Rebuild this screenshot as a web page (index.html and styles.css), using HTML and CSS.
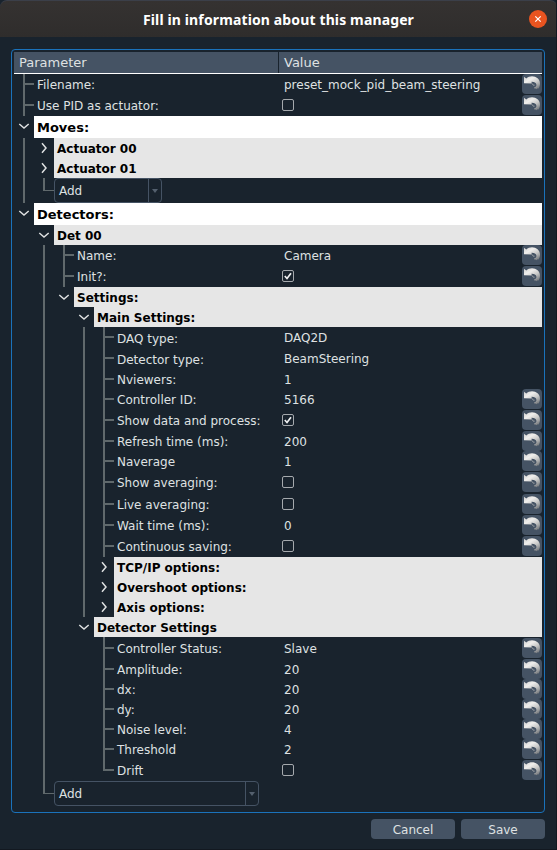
FILE: index.html
```
<!DOCTYPE html>
<html lang="en">
<head>
<meta charset="utf-8">
<title>Fill in information about this manager</title>
<link rel="stylesheet" href="styles.css">
</head>
<body>
<svg class="defs" width="0" height="0" aria-hidden="true">
  <defs>
    <linearGradient id="silver" x1="0" y1="0" x2="0.7" y2="1">
      <stop offset="0" stop-color="#cfcfcf"/><stop offset="0.35" stop-color="#efeeec"/><stop offset="0.65" stop-color="#cbcbca"/><stop offset="1" stop-color="#808386"/>
    </linearGradient>
    <symbol id="undo" viewBox="0 0 20 20"><path fill="url(#silver)" d="M2 2.800 4.300 4.500C7 1.600 12.500 1.400 15.600 4.300c2.900 2.800 3.200 7 .9 10.200l-1-.2-.8 1-.9-.8-1 .2-1-1.200c1.800-.2 2.900-1.500 2.600-3.100-.3-1.700-2.200-2.700-4.900-2.600L9.800 9.400 2 9.200z"/><path fill="none" stroke="#a9acae" stroke-width="1" d="M10.300 9.600c.2 1.200 1 1.700 2.200 1.600"/></symbol>
    <symbol id="down" viewBox="0 0 20 20"><path fill="none" stroke="#dfe1e2" stroke-width="1.500" d="m5.300 8 4.700 4L14.700 8"/></symbol>
    <symbol id="right" viewBox="0 0 20 20"><path fill="none" stroke="#dfe1e2" stroke-width="1.500" d="m8 5.300 4 4.700-4 4.700"/></symbol>
    <symbol id="tick" viewBox="0 0 10 10"><path fill="none" stroke="#f0f1f2" stroke-width="1.700" d="m1.800 5 2.200 2.500L8 2.200"/></symbol>
  </defs>
</svg>
<header class="titlebar">
  <h1>Fill in information about this manager</h1>
  <button class="close" aria-label="Close"><svg viewBox="0 0 18 18"><path d="m6.300 6.300 5.400 5.400m0-5.400-5.400 5.400" stroke="#fff" stroke-width="1.200"/></svg></button>
</header>
<main class="panel">
  <div class="head"><span class="col-name">Parameter</span><span class="col-value">Value</span></div>
  <ul class="tree">
    <li class="row h21"><i class="twig"></i><span class="label">Filename:</span><span class="value">preset_mock_pid_beam_steering</span><svg class="undo"><use href="#undo"/></svg></li>
    <li class="row h21"><i class="twig"></i><span class="label">Use PID as actuator:</span><span class="value"><i class="check"></i></span><svg class="undo"><use href="#undo"/></svg></li>
    <li>
      <div class="row group top"><svg class="arrow"><use href="#down"/></svg><span class="label">Moves:</span></div>
      <ul class="children rail">
        <li class="row group"><svg class="arrow"><use href="#right"/></svg><span class="label">Actuator 00</span></li>
        <li class="row group"><svg class="arrow"><use href="#right"/></svg><span class="label">Actuator 01</span></li>
        <li class="row add"><i class="twig last"></i><span class="combo">Add<i class="drop"></i></span></li>
      </ul>
    </li>
    <li>
      <div class="row group top"><svg class="arrow"><use href="#down"/></svg><span class="label">Detectors:</span></div>
      <ul class="children">
        <li>
          <div class="row group"><svg class="arrow"><use href="#down"/></svg><span class="label">Det 00</span></div>
          <ul class="children rail">
            <li class="row h21"><i class="twig"></i><span class="label">Name:</span><span class="value">Camera</span><svg class="undo"><use href="#undo"/></svg></li>
            <li class="row h21"><i class="twig"></i><span class="label">Init?:</span><span class="value"><svg class="check"><use href="#tick"/></svg></span><svg class="undo"><use href="#undo"/></svg></li>
            <li>
              <div class="row group"><svg class="arrow"><use href="#down"/></svg><span class="label">Settings:</span></div>
              <ul class="children">
                <li>
                  <div class="row group"><svg class="arrow"><use href="#down"/></svg><span class="label">Main Settings:</span></div>
                  <ul class="children rail">
                    <li class="row h21"><i class="twig"></i><span class="label low">DAQ type:</span><span class="value">DAQ2D</span></li>
                    <li class="row h21"><i class="twig"></i><span class="label low">Detector type:</span><span class="value">BeamSteering</span></li>
                    <li class="row"><i class="twig"></i><span class="label">Nviewers:</span><span class="value">1</span></li>
                    <li class="row h21"><i class="twig"></i><span class="label">Controller ID:</span><span class="value">5166</span><svg class="undo"><use href="#undo"/></svg></li>
                    <li class="row h21"><i class="twig"></i><span class="label">Show data and process:</span><span class="value"><svg class="check"><use href="#tick"/></svg></span><svg class="undo"><use href="#undo"/></svg></li>
                    <li class="row"><i class="twig"></i><span class="label">Refresh time (ms):</span><span class="value">200</span><svg class="undo"><use href="#undo"/></svg></li>
                    <li class="row h21"><i class="twig"></i><span class="label">Naverage</span><span class="value">1</span><svg class="undo"><use href="#undo"/></svg></li>
                    <li class="row h22"><i class="twig"></i><span class="label">Show averaging:</span><span class="value"><i class="check"></i></span><svg class="undo"><use href="#undo"/></svg></li>
                    <li class="row h21"><i class="twig"></i><span class="label">Live averaging:</span><span class="value"><i class="check"></i></span><svg class="undo"><use href="#undo"/></svg></li>
                    <li class="row h21"><i class="twig"></i><span class="label">Wait time (ms):</span><span class="value">0</span><svg class="undo"><use href="#undo"/></svg></li>
                    <li class="row h21"><i class="twig"></i><span class="label">Continuous saving:</span><span class="value"><i class="check"></i></span><svg class="undo"><use href="#undo"/></svg></li>
                    <li class="row group"><svg class="arrow"><use href="#right"/></svg><span class="label">TCP/IP options:</span></li>
                    <li class="row group"><svg class="arrow"><use href="#right"/></svg><span class="label">Overshoot options:</span></li>
                    <li class="row group"><svg class="arrow"><use href="#right"/></svg><span class="label">Axis options:</span></li>
                  </ul>
                </li>
                <li>
                  <div class="row group"><svg class="arrow"><use href="#down"/></svg><span class="label">Detector Settings</span></div>
                  <ul class="children">
                    <li class="row h22 spaced"><i class="twig"></i><span class="label">Controller Status:</span><span class="value">Slave</span><svg class="undo"><use href="#undo"/></svg></li>
                    <li class="row"><i class="twig"></i><span class="label">Amplitude:</span><span class="value">20</span><svg class="undo"><use href="#undo"/></svg></li>
                    <li class="row"><i class="twig"></i><span class="label">dx:</span><span class="value">20</span><svg class="undo"><use href="#undo"/></svg></li>
                    <li class="row"><i class="twig"></i><span class="label">dy:</span><span class="value">20</span><svg class="undo"><use href="#undo"/></svg></li>
                    <li class="row"><i class="twig"></i><span class="label">Noise level:</span><span class="value">4</span><svg class="undo"><use href="#undo"/></svg></li>
                    <li class="row h21"><i class="twig"></i><span class="label">Threshold</span><span class="value">2</span><svg class="undo"><use href="#undo"/></svg></li>
                    <li class="row h21"><i class="twig last"></i><span class="label">Drift</span><span class="value"><i class="check"></i></span><svg class="undo"><use href="#undo"/></svg></li>
                  </ul>
                </li>
              </ul>
            </li>
          </ul>
        </li>
        <li class="row add wide"><i class="twig last"></i><span class="combo">Add<i class="drop"></i></span></li>
      </ul>
    </li>
  </ul>
</main>
<footer class="actions"><button>Cancel</button><button>Save</button></footer>
</body>
</html>
```
FILE: styles.css
```
* { box-sizing: border-box; }
body {
  margin: 0;
  width: 557px;
  height: 850px;
  overflow: hidden;
  background: #19232d;
  color: #dfe1e2;
  font: 12px/20px "DejaVu Sans", sans-serif;
  border-right: 1px solid #121820;
  border-bottom: 1px solid #121820;
}
.defs { display: block; height: 0; }
ul { margin: 0; padding: 0; list-style: none; }
button { border: 0; padding: 0; font: inherit; color: inherit; }

.titlebar {
  display: flex;
  align-items: center;
  height: 37px;
  margin-right: -1px;
  padding: 0 10px 0 28px;
  background: linear-gradient(#353231, #2f2d2c);
  border-top: 1px solid #3b3f49;
  border-radius: 7px 7px 0 0;
}
.titlebar h1 {
  flex: 1;
  margin: 0;
  text-align: center;
  color: #fff;
  font: bold 14px/20px "Noto Sans", sans-serif;
  letter-spacing: 0.13px;
  padding-top: 2px;
}
.close { width: 18px; height: 18px; border-radius: 50%; background: #e95420; }
.close svg { display: block; }

.panel {
  width: 534px;
  height: 764px;
  margin: 12px 0 0 11px;
  padding: 2px;
  border: 1px solid #1a72bb;
  border-radius: 4px;
}
.head {
  display: flex;
  height: 22px;
  gap: 1px;
  border-bottom: 1px solid #fff;
  font-size: 13px;
  line-height: 21px;
}
.head span { background: #455364; padding-left: 5px; }
.head .col-name { width: 264px; }
.head .col-value { flex: 1; }

.row { display: flex; height: 20px; }
.h21 { height: 21px; }
.h22 { height: 22px; }
.children { padding-left: 20px; }
.rail { background: linear-gradient(#60696c, #60696c) 9px 0 / 2px 100% no-repeat; }
.twig {
  flex: 0 0 20px;
  background:
    linear-gradient(#60696c, #60696c) 9px 0 / 2px 100% no-repeat,
    linear-gradient(#60696c, #60696c) 9px 9px / 11px 2px no-repeat;
}
.twig.last { background-size: 2px 11px, 11px 2px; }
.arrow { flex: 0 0 20px; height: 20px; }
.label { flex: 1; padding-left: 3px; white-space: nowrap; line-height: 22px; }
.value { width: 238px; height: 20px; line-height: 22px; }
.value:last-child { width: 258px; }
.low { line-height: 24px; }
.spaced > * { margin-top: 1px; }
.spaced .twig { margin-top: 0; background-position: 9px 0, 9px 10px; }
.group .label { height: 20px; background: #e6e6e6; color: #000; font-weight: bold; }
.group.top { height: 22px; }
.group.top .label { height: 22px; background: #fff; font-size: 13px; line-height: 23px; }
.undo { width: 20px; height: 20px; border-radius: 4px; background: #455364; }

.check {
  display: block;
  width: 12px;
  height: 12px;
  margin: 4px 0 0 -2px;
  border: 1px solid #a5a9ad;
  border-radius: 2px;
}

.add { height: 25px; }
.add .twig.last { background-size: 2px 13px, 11px 1px; background-position: 9px 0, 9px 12px; }
.combo {
  display: flex;
  width: 108px;
  height: 25px;
  padding-left: 4px;
  justify-content: space-between;
  border: 1px solid #455364;
  border-radius: 4px;
  line-height: 24px;
}
.wide .combo { width: 205px; }
.drop {
  display: flex;
  width: 13px;
  height: 23px;
  border-left: 1px solid #455364;
  align-items: center;
  justify-content: center;
}
.drop::after {
  content: "";
  border: solid transparent;
  border-width: 4px 3.5px 0;
  border-top-color: #54606e;
}

.actions { display: flex; justify-content: flex-end; gap: 6px; margin: 6px 11px 0 0; }
.actions button {
  width: 84px;
  height: 20px;
  border-radius: 4px;
  background: #455364;
  line-height: 22px;
}
```
